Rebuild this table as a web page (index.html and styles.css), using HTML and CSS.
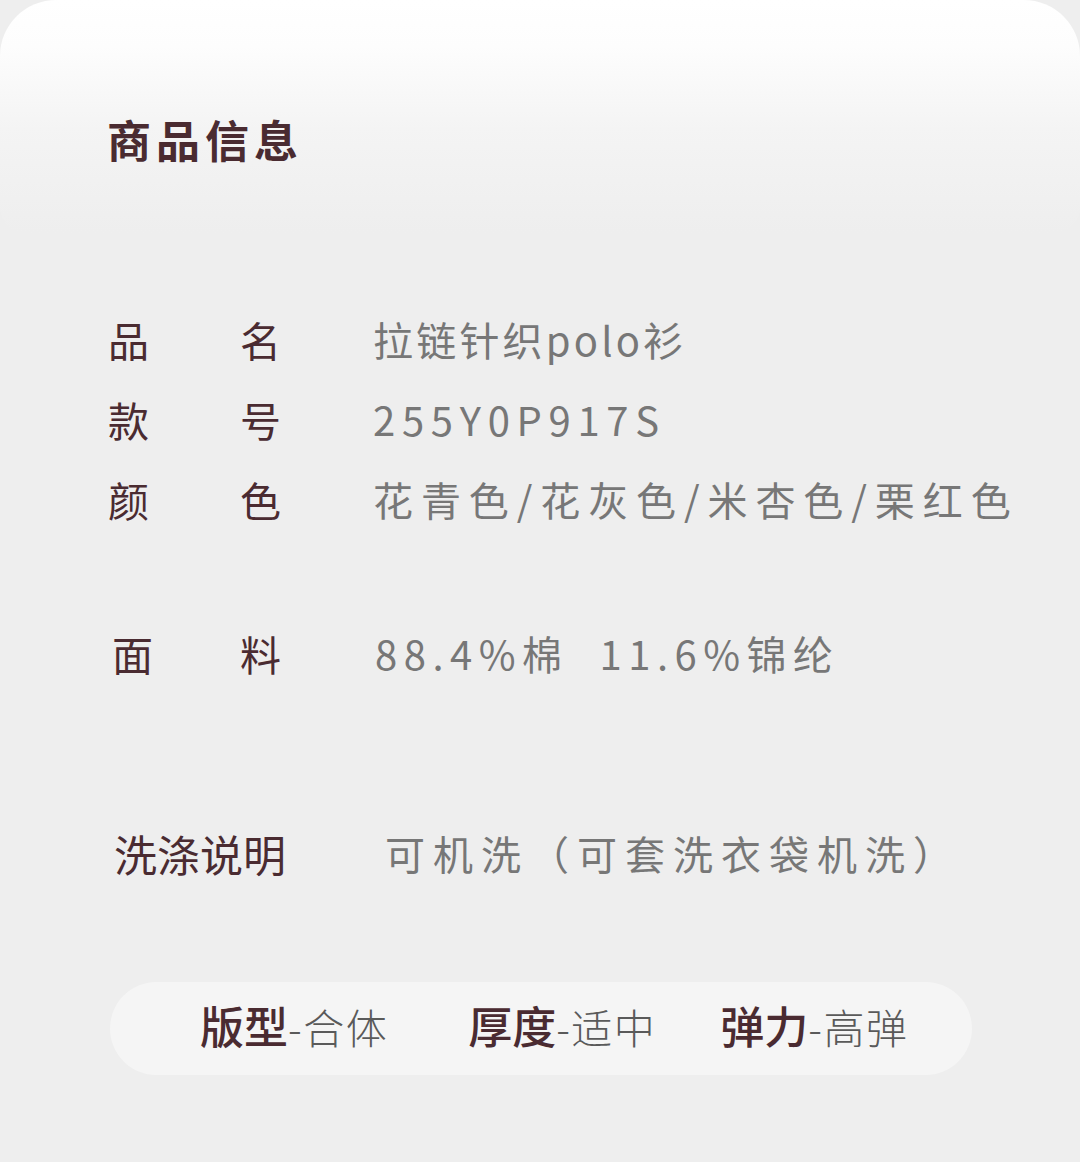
FILE: index.html
```html
<!DOCTYPE html>
<html lang="zh-CN">
<head>
<meta charset="utf-8">
<link rel="stylesheet" href="styles.css">
</head>
<body>
<div class="page">
  <header class="head">
    <h1 class="title">商品信息</h1>
  </header>

  <section class="basic">
    <div class="row">
      <span class="lab">品</span><span class="lab">名</span>
      <span class="val v-name">拉链针织polo衫</span>
    </div>
    <div class="row">
      <span class="lab">款</span><span class="lab">号</span>
      <span class="val v-code">255Y0P917S</span>
    </div>
    <div class="row">
      <span class="lab">颜</span><span class="lab">色</span>
      <span class="val v-color">花青色/花灰色/米杏色/栗红色</span>
    </div>
  </section>

  <section class="fabric row">
    <span class="lab">面</span><span class="lab">料</span>
    <span class="val v-fabric">88.4%棉&nbsp;&nbsp;11.6%锦纶</span>
  </section>

  <section class="wash">
    <span class="wash-lab">洗涤说明</span>
    <span class="val v-wash">可机洗（可套洗衣袋机洗）</span>
  </section>

  <div class="pill">
    <span class="attr"><b>版型</b><i>-合体</i></span>
    <span class="attr a2"><b>厚度</b><i>-适中</i></span>
    <span class="attr a3"><b>弹力</b><i>-高弹</i></span>
  </div>
</div>
</body>
</html>
```

FILE: styles.css
```css
html, body {
  margin: 0;
  padding: 0;
  background: #eeeeee;
}
body {
  font-family: "Noto Sans CJK SC", "Noto Sans", sans-serif;
  width: 1080px;
  height: 1162px;
  overflow: hidden;
}
.page {
  display: flex;
  flex-direction: column;
}
.head {
  height: 233px;
  border-radius: 56px 56px 26px 26px;
  background: linear-gradient(180deg, #ffffff 0%, #fdfdfd 20%, #f4f4f4 55%, #eeeeee 100%);
  display: flex;
  align-items: center;
  padding: 44px 0 0 107px;
  box-sizing: border-box;
}
.title {
  margin: 0;
  font-size: 44px;
  font-weight: 700;
  letter-spacing: 5px;
  color: #4a2b31;
  line-height: 1;
}
.basic {
  margin-top: 66px;
  display: flex;
  flex-direction: column;
}
.row {
  display: grid;
  grid-template-columns: 132px 133px 1fr;
  padding-left: 108px;
  height: 80px;
  align-items: center;
  line-height: 80px;
}
.lab {
  font-size: 41px;
  color: #4a2b31;
}
.val {
  font-size: 40px;
  color: #777777;
  white-space: nowrap;
}
.v-name { letter-spacing: 3.2px; }
.v-code { letter-spacing: 6.7px; }
.v-color { letter-spacing: 7.9px; }
.fabric {
  margin-top: 74px;
  padding-left: 112px;
  grid-template-columns: 128px 135px 1fr;
}
.v-fabric { letter-spacing: 6.5px; }
.wash {
  margin-top: 120px;
  padding-left: 114px;
  height: 80px;
  display: flex;
  align-items: center;
  line-height: 80px;
}
.wash-lab {
  font-size: 43px;
  color: #4a2b31;
  width: 271px;
}
.v-wash { letter-spacing: 8px; font-size: 40px; }
.pill {
  margin: 89px 0 0 110px;
  width: 862px;
  height: 93px;
  border-radius: 47px;
  background: #f5f5f5;
  display: flex;
  align-items: center;
  box-sizing: border-box;
  padding: 0 0 8px 90px;
}
.attr {
  display: inline-flex;
  align-items: baseline;
  white-space: nowrap;
}
.attr b {
  font-size: 44px;
  font-weight: 500;
  color: #4a2b31;
}
.attr i {
  font-style: normal;
  font-size: 41px;
  font-weight: 300;
  letter-spacing: 1.5px;
  color: #5a5a5a;
}
.a2 { margin-left: 80px; }
.a3 { margin-left: 64px; }
```
